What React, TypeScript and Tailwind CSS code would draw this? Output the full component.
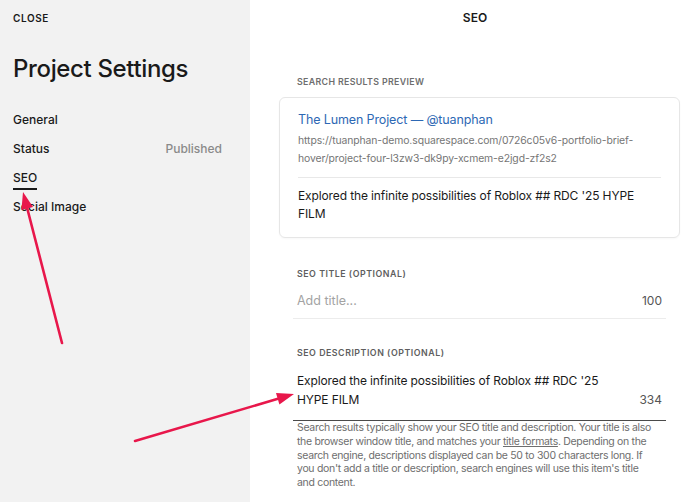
import React from 'react';

const font = { fontFamily: 'Inter, "Liberation Sans", sans-serif' };

function Arrow({ x1, y1, x2, y2 }: { x1: number; y1: number; x2: number; y2: number }) {
  // shaft from tail (x1,y1) to just before the head; head drawn as a filled triangle at (x2,y2)
  const dx = x2 - x1;
  const dy = y2 - y1;
  const len = Math.hypot(dx, dy);
  const ux = dx / len;
  const uy = dy / len;
  const headLen = 17;
  const headHalf = 6;
  const bx = x2 - ux * headLen;
  const by = y2 - uy * headLen;
  const p1 = `${x2},${y2}`;
  const p2 = `${bx - uy * headHalf},${by + ux * headHalf}`;
  const p3 = `${bx + uy * headHalf},${by - ux * headHalf}`;
  return (
    <g>
      <line x1={x1} y1={y1} x2={bx + ux * 2} y2={by + uy * 2} stroke="#e8174b" strokeWidth={2.6} strokeLinecap="round" />
      <polygon points={`${p1} ${p2} ${p3}`} fill="#e8174b" />
    </g>
  );
}

const navItems = [
  { label: 'General' },
  { label: 'Status', value: 'Published' },
  { label: 'SEO', active: true },
  { label: 'Social Image' },
];

export default function App() {
  return (
    <div className="relative flex h-[502px] w-[700px] overflow-hidden bg-white text-[#1a1a1a]" style={font}>
      {/* Sidebar */}
      <aside className="w-[250px] shrink-0 bg-[#f2f2f2] px-[13px]">
        <div className="pt-[12px] text-[10px] font-semibold tracking-[0.06em] leading-[12px]">CLOSE</div>
        <h1 className="mt-[30px] text-[24px] font-medium leading-[30px] tracking-[-0.015em]">Project Settings</h1>
        <nav className="mt-[21px] flex flex-col">
          {navItems.map(item => (
            <div key={item.label} className="flex h-[29px] items-center justify-between pr-[15px]">
              <span className={`relative text-[12px] font-medium ${item.active ? 'after:absolute after:left-0 after:right-0 after:-bottom-[3px] after:h-[2px] after:bg-[#1a1a1a]' : ''}`}>
                {item.label}
              </span>
              {item.value && <span className="text-[12px] font-medium text-[#8a8a8a]">{item.value}</span>}
            </div>
          ))}
        </nav>
      </aside>

      {/* Main panel */}
      <main className="flex-1">
        <div className="pt-[11px] text-center text-[12px] font-semibold leading-[14px]">SEO</div>

        <div className="ml-[29px] mr-[20px] mt-[51px]">
          <div className="pl-[18px] text-[8.8px] font-semibold tracking-[0.04em] text-[#6e6e6e] leading-[12px]">SEARCH RESULTS PREVIEW</div>

          {/* Search preview card */}
          <div className="mt-[9px] rounded-[6px] border border-[#e6e6e6] px-[18px] pt-[12px] pb-[14px] shadow-[0_1px_2px_rgba(0,0,0,0.03)]">
            <div className="text-[12.5px] leading-[20px] tracking-[-0.01em] text-[#2d68b4]">The Lumen Project — @tuanphan</div>
            <div className="mt-[2px] text-[10.4px] leading-[18px] tracking-[-0.01em] text-[#757575]">
              https://tuanphan-demo.squarespace.com/0726c05v6-portfolio-brief-
              <br />
              hover/project-four-l3zw3-dk9py-xcmem-e2jgd-zf2s2
            </div>
            <div className="mt-[9px] h-px bg-[#e8e8e8]" />
            <div className="mt-[9px] text-[12px] leading-[18px] tracking-[-0.01em] text-[#1a1a1a]">
              Explored the infinite possibilities of Roblox ## RDC '25 HYPE
              <br />
              FILM
            </div>
          </div>

          {/* SEO title field */}
          <div className="mt-[30px] pl-[18px] text-[8.8px] font-semibold tracking-[0.06em] text-[#5e5e5e] leading-[12px]">SEO TITLE (OPTIONAL)</div>
          <div className="mx-[14px] mt-[12px] flex items-center justify-between border-b border-[#ececec] px-[4px] pb-[8px]">
            <span className="text-[12.5px] leading-[18px] text-[#a3a3a3]">Add title...</span>
            <span className="text-[12px] leading-[18px] text-[#555]">100</span>
          </div>

          {/* SEO description field */}
          <div className="mt-[28px] pl-[18px] text-[8.8px] font-semibold tracking-[0.06em] text-[#5e5e5e] leading-[12px]">SEO DESCRIPTION (OPTIONAL)</div>
          <div className="mx-[14px] mt-[12px] flex items-end justify-between border-b border-[#4a4a4a] px-[4px] pb-[11px]">
            <span className="text-[12px] leading-[19px] tracking-[-0.01em] text-[#1a1a1a]">
              Explored the infinite possibilities of Roblox ## RDC '25
              <br />
              HYPE FILM
            </span>
            <span className="text-[12px] leading-[19px] text-[#555]">334</span>
          </div>
          <p className="ml-[18px] mr-[12px] mt-0 text-[10.5px] leading-[13.8px] tracking-[-0.03em] text-[#6e6e6e]">
            Search results typically show your SEO title and description. Your title is also
            <br />
            the browser window title, and matches your <span className="underline">title formats</span>. Depending on the
            <br />
            search engine, descriptions displayed can be 50 to 300 characters long. If
            <br />
            you don't add a title or description, search engines will use this item's title
            <br />
            and content.
          </p>
        </div>
      </main>

      {/* Annotation arrows */}
      <svg className="pointer-events-none absolute inset-0" width={700} height={502}>
        <Arrow x1={62} y1={343} x2={23} y2={192} />
        <Arrow x1={135} y1={441} x2={294} y2={394} />
      </svg>
    </div>
  );
}
